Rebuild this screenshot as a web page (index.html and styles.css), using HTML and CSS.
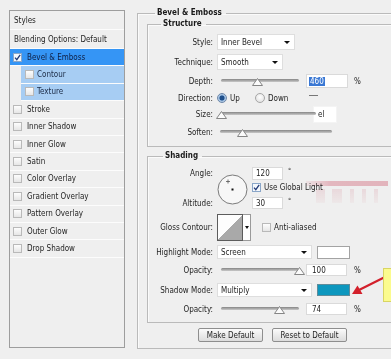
FILE: index.html
```html
<!DOCTYPE html>
<html lang="en">
<head>
    <meta charset="UTF-8">
    <title>Layer Style - Bevel &amp; Emboss</title>
    <link rel="stylesheet" href="styles.css">
</head>
<body>
    <div class="dialog">
        <div class="styles-panel">
            <div class="styles-head">Styles</div>
            <div class="styles-item blend">Blending Options: Default</div>
            <div class="styles-item active"><span class="check checked"></span>Bevel &amp; Emboss</div>
            <div class="styles-item sub"><span class="check"></span>Contour</div>
            <div class="styles-item sub"><span class="check"></span>Texture</div>
            <div class="styles-item"><span class="check"></span>Stroke</div>
            <div class="styles-item"><span class="check"></span>Inner Shadow</div>
            <div class="styles-item"><span class="check"></span>Inner Glow</div>
            <div class="styles-item"><span class="check"></span>Satin</div>
            <div class="styles-item"><span class="check"></span>Color Overlay</div>
            <div class="styles-item"><span class="check"></span>Gradient Overlay</div>
            <div class="styles-item"><span class="check"></span>Pattern Overlay</div>
            <div class="styles-item"><span class="check"></span>Outer Glow</div>
            <div class="styles-item"><span class="check"></span>Drop Shadow</div>
        </div>

        <fieldset class="group group-outer">
            <legend>Bevel &amp; Emboss</legend>

            <fieldset class="group group-structure">
                <legend>Structure</legend>
                <div class="rows structure-rows">
                    <div class="row">
                        <div class="label">Style:</div>
                        <div class="select select-style">Inner Bevel</div>
                    </div>
                    <div class="row">
                        <div class="label">Technique:</div>
                        <div class="select select-technique">Smooth</div>
                    </div>
                    <div class="row">
                        <div class="label">Depth:</div>
                        <div class="slider">
                            <div class="slider-track"></div>
                            <svg class="slider-thumb" style="left: 46%" width="11" height="8" viewBox="0 0 11 8"><polygon points="0.5,7.5 5.5,0.5 10.5,7.5" fill="#fbfbfb" stroke="#858585"/></svg>
                        </div>
                        <div class="field field-num"><span class="selected">460</span></div>
                        <span class="unit">%</span>
                    </div>
                    <div class="row">
                        <div class="label">Direction:</div>
                        <span class="radio-opt up"><span class="radio checked"></span>Up</span>
                        <span class="radio-opt"><span class="radio"></span>Down</span>
                        <span class="stray-line"></span>
                    </div>
                    <div class="row">
                        <div class="label">Size:</div>
                        <div class="slider slider-size">
                            <div class="slider-track"></div>
                            <svg class="slider-thumb" style="left: 1%" width="11" height="8" viewBox="0 0 11 8"><polygon points="0.5,7.5 5.5,0.5 10.5,7.5" fill="#fbfbfb" stroke="#858585"/></svg>
                        </div>
                        <div class="field field-size">el</div>
                    </div>
                    <div class="row">
                        <div class="label">Soften:</div>
                        <div class="slider slider-soften">
                            <div class="slider-track"></div>
                            <svg class="slider-thumb" style="left: 20%" width="11" height="8" viewBox="0 0 11 8"><polygon points="0.5,7.5 5.5,0.5 10.5,7.5" fill="#fbfbfb" stroke="#858585"/></svg>
                        </div>
                    </div>
                </div>
            </fieldset>

            <fieldset class="group group-shading">
                <legend>Shading</legend>
                <div class="angle-block">
                    <div class="label angle-label">Angle:</div>
                    <svg class="dial" width="31" height="31" viewBox="0 0 31 31">
                        <circle cx="15.5" cy="15.5" r="14.5" fill="#f7f7f7" stroke="#7b7b7b"/>
                        <rect x="14.5" y="14.5" width="2" height="2" fill="#111"/>
                        <path d="M9 7.5h4M11 5.5v4" stroke="#555" stroke-width="0.8"/>
                    </svg>
                    <div class="angle-cell angle-cell-1"><div class="field field-angle">120</div><span class="deg">°</span></div>
                    <div class="angle-cell angle-cell-2"><span class="check checked small-check"></span>Use Global Light</div>
                    <div class="label altitude-label">Altitude:</div>
                    <div class="angle-cell angle-cell-3"><div class="field field-alt">30</div><span class="deg">°</span></div>
                </div>
                <div class="rows shading-rows">
                    <div class="row">
                        <div class="label">Gloss Contour:</div>
                        <div class="contour">
                            <div class="contour-preview"></div>
                            <div class="contour-arrow"></div>
                        </div>
                        <span class="check anti-check"></span>Anti-aliased
                    </div>
                    <div class="row">
                        <div class="label">Highlight Mode:</div>
                        <div class="select select-mode">Screen</div>
                        <div class="swatch"></div>
                    </div>
                    <div class="row">
                        <div class="label">Opacity:</div>
                        <div class="slider">
                            <div class="slider-track"></div>
                            <svg class="slider-thumb" style="left: 100%" width="11" height="8" viewBox="0 0 11 8"><polygon points="0.5,7.5 5.5,0.5 10.5,7.5" fill="#fbfbfb" stroke="#858585"/></svg>
                        </div>
                        <div class="field field-op">100</div>
                        <span class="unit unit-op">%</span>
                    </div>
                    <div class="row">
                        <div class="label">Shadow Mode:</div>
                        <div class="select select-mode">Multiply</div>
                        <div class="swatch swatch-shadow"></div>
                    </div>
                    <div class="row">
                        <div class="label">Opacity:</div>
                        <div class="slider">
                            <div class="slider-track"></div>
                            <svg class="slider-thumb" style="left: 74%" width="11" height="8" viewBox="0 0 11 8"><polygon points="0.5,7.5 5.5,0.5 10.5,7.5" fill="#fbfbfb" stroke="#858585"/></svg>
                        </div>
                        <div class="field field-op">74</div>
                        <span class="unit unit-op">%</span>
                    </div>
                </div>
            </fieldset>

            <div class="buttons">
                <button class="btn btn-make">Make Default</button>
                <button class="btn btn-reset">Reset to Default</button>
            </div>
        </fieldset>

        <!-- annotations pasted over the screenshot -->
        <div class="ghost"></div>
        <svg class="red-arrow" width="40" height="26" viewBox="0 0 40 26">
            <line x1="35" y1="5" x2="11" y2="17" stroke="#d3202b" stroke-width="2.2" stroke-linecap="round"/>
            <polygon points="4,21 14.5,21 9.5,12.5" fill="#d3202b"/>
        </svg>
        <div class="note"></div>
    </div>
</body>
</html>
```

FILE: styles.css
```css
* {
    box-sizing: border-box;
}
body {
    margin: 0;
    height: 359px;
    overflow: hidden;
    background: #efefef;
    font-family: "DejaVu Sans Condensed", "Liberation Sans", sans-serif;
    font-size: 8px;
    color: #1e1e1e;
}
.dialog {
    position: relative;
    display: flex;
    align-items: flex-start;
}

/* left list of styles */
.styles-panel {
    flex: none;
    width: 116px;
    height: 338px;
    margin: 10px 0 0 9px;
    border: 1px solid #9d9d9d;
    background: #efefef;
}
.styles-head, .styles-item {
    display: flex;
    align-items: center;
    border-bottom: 1px solid #fcfcfc;
    padding-left: 3px;
    white-space: nowrap;
}
.styles-head {
    height: 19px;
    padding-left: 4px;
}
.styles-item {
    height: 17.4px;
}
.styles-item.blend {
    height: 19px;
    padding-left: 4px;
}
.styles-item.active {
    background: #3595f5;
    color: #0f1f44;
}
.styles-item.sub {
    margin-left: 11px;
    padding-left: 4px;
    background: #a7cdf3;
    color: #1b2a44;
}
.check {
    flex: none;
    display: inline-block;
    width: 9px;
    height: 9px;
    margin-right: 5px;
    border: 1px solid #b9b9b9;
    background: linear-gradient(#fdfdfd, #e6e6e6);
}
.styles-item.sub .check {
    margin-right: 3px;
}
.check.checked {
    border-color: #8aa6c8;
    background: #f4f8fc url("data:image/svg+xml,%3Csvg xmlns='http://www.w3.org/2000/svg' width='7' height='7'%3E%3Cpath d='M1 3.6l1.8 2L6.2 0.8' fill='none' stroke='%23213a78' stroke-width='1.3'/%3E%3C/svg%3E") center no-repeat;
}

/* group boxes */
.group {
    margin: 0;
    padding: 0;
    min-width: 0;
    border: 1px solid #bababa;
    box-shadow: inset 1px 1px 0 #fafafa;
}
.group > legend {
    padding: 0 4px 0 2px;
    font-weight: bold;
    line-height: 10px;
    color: #1a1a1a;
}
.group-outer {
    flex: none;
    width: 262px;
    margin: 8px 0 0 12px;
    padding: 0 0 6px 9px;
}
.group-outer > legend {
    margin-left: 8px;
}
.group-structure {
    width: 252px;
    margin-top: 1px;
    padding: 4px 0 3px 3px;
}
.group-structure > legend {
    margin-left: 10px;
}
.group-shading {
    width: 252px;
    margin-top: 4px;
    padding: 4px 0 7px 3px;
}
.group-shading > legend {
    margin-left: 12px;
}

.rows {
    display: grid;
}
.structure-rows {
    grid-template-rows: 18px 22px 16px 18px 14px 22px;
}
.shading-rows {
    grid-template-rows: 28px 22px 14px 26px 12px;
}
.row {
    display: flex;
    align-items: center;
    white-space: nowrap;
}
.label {
    flex: none;
    width: 66px;
    padding-right: 4px;
    text-align: right;
    white-space: nowrap;
}

/* controls */
.select {
    flex: none;
    display: flex;
    align-items: center;
    justify-content: space-between;
    height: 16px;
    padding: 0 4px 0 3px;
    background: #fff;
    border: 1px solid #dedede;
    overflow: hidden;
}
.select::after {
    content: "";
    flex: none;
    border-left: 3px solid transparent;
    border-right: 3px solid transparent;
    border-top: 3px solid #111;
}
.select-style { width: 78px; }
.select-technique { width: 66px; }
.select-mode {
    width: 95px;
    height: 14px;
}

.field {
    flex: none;
    display: flex;
    align-items: center;
    height: 14px;
    padding-left: 2px;
    background: #fff;
    border: 1px solid #dadada;
}
.field-num {
    width: 42px;
    margin-left: 7px;
}
.selected {
    background: #3a78d4;
    color: #fff;
    padding: 0 1px;
}
.unit {
    margin-left: 6px;
}
.field-size {
    width: 24px;
    height: 17px;
    margin-left: -3px;
    padding-left: 4px;
    border-color: #f4f4f4;
}
.field-op {
    width: 41px;
    height: 12px;
    margin-left: 7px;
    padding-left: 5px;
}
.unit-op {
    margin-left: 7px;
}

.slider {
    position: relative;
    flex: none;
    width: 78px;
    height: 8px;
    margin: 4px 0 0 4px;
}
.slider-size {
    width: 96px;
    margin-left: 3px;
}
.slider-soften {
    width: 112px;
    margin-left: 3px;
}
.slider-track {
    height: 3px;
    border-radius: 2px;
    background: linear-gradient(#858585, #c9c9c9);
}
.slider-thumb {
    position: absolute;
    top: -1px;
    margin-left: -5px;
}

.radio-opt {
    display: inline-flex;
    align-items: center;
}
.radio-opt.up {
    width: 38px;
}
.radio {
    flex: none;
    width: 10px;
    height: 10px;
    margin-right: 3px;
    border: 1px solid #a6a6a6;
    border-radius: 50%;
    background: radial-gradient(circle at 50% 40%, #fefefe, #dcdcdc);
}
.radio.checked {
    border-color: #6c86a8;
    background: radial-gradient(circle, #1f4f8a 0 2.2px, #8fb3da 2.8px, #dbe7f3 5px);
}
.stray-line {
    width: 9px;
    height: 1px;
    margin: -5px 0 0 21px;
    background: #777;
}

/* angle / altitude */
.angle-block {
    display: grid;
    grid-template-columns: 66px 35px 1fr;
    grid-template-rows: 16px 12px 20px;
    align-items: center;
}
.angle-label { grid-column: 1; grid-row: 1; }
.altitude-label { grid-column: 1; grid-row: 3; }
.dial {
    grid-column: 2;
    grid-row: 1 / 4;
}
.angle-cell {
    grid-column: 3;
    display: flex;
    align-items: center;
    white-space: nowrap;
}
.angle-cell-1 { grid-row: 1; }
.angle-cell-2 { grid-row: 2; }
.angle-cell-3 { grid-row: 3; }
.field-angle {
    width: 31px;
    height: 13px;
    padding-left: 3px;
}
.field-alt {
    width: 31px;
    height: 12px;
    padding-left: 3px;
}
.deg {
    margin: 0 0 4px 5px;
    font-size: 7px;
}
.small-check {
    margin-right: 3px;
    background-color: #d3e2f2;
}

.contour {
    flex: none;
    display: flex;
    height: 27px;
}
.contour-preview {
    width: 26px;
    border: 1px solid #5c5c5c;
    background: linear-gradient(to bottom right, #fdfdfd 50%, #a9a9a9 50%);
}
.contour-arrow {
    display: flex;
    align-items: center;
    justify-content: center;
    width: 8px;
    background: #fff;
    border: 1px solid #9a9a9a;
    border-left: none;
}
.contour-arrow::after {
    content: "";
    border-left: 2px solid transparent;
    border-right: 2px solid transparent;
    border-top: 3px solid #111;
}
.anti-check {
    margin: 0 3px 0 11px;
}

.swatch {
    flex: none;
    width: 33px;
    height: 13px;
    margin-left: 5px;
    background: #fff;
    border: 1px solid #a3a3a3;
}
.swatch-shadow {
    height: 12px;
    background: #0d97be;
    border-color: #5f8c9a;
}

/* bottom buttons */
.buttons {
    display: flex;
    gap: 9px;
    margin-top: 5px;
    padding-left: 51px;
}
.btn {
    height: 14px;
    padding: 0;
    border: 1px solid #8e8e8e;
    border-radius: 2px;
    background: linear-gradient(#fbfbfb, #dcdcdc);
    font: inherit;
    color: #1e1e1e;
}
.btn-make { width: 65px; }
.btn-reset { width: 75px; }

/* annotations on top of the dialog */
.ghost {
    position: absolute;
    left: 306px;
    top: 181px;
    width: 82px;
    height: 26px;
    mix-blend-mode: multiply;
    background:
        linear-gradient(to right, rgba(244, 190, 200, 0.2), #f3c3cb 30%, #f2c0c9) top / 100% 5px no-repeat,
        linear-gradient(rgba(238, 186, 194, 0.35), rgba(238, 186, 194, 0.1)) 10px 8px / 9px 14px no-repeat,
        linear-gradient(rgba(238, 186, 194, 0.35), rgba(238, 186, 194, 0.1)) 26px 8px / 10px 14px no-repeat,
        linear-gradient(rgba(238, 186, 194, 0.35), rgba(238, 186, 194, 0.1)) 44px 8px / 4px 14px no-repeat,
        linear-gradient(rgba(238, 186, 194, 0.35), rgba(238, 186, 194, 0.1)) 56px 8px / 4px 14px no-repeat,
        linear-gradient(rgba(238, 186, 194, 0.35), rgba(238, 186, 194, 0.1)) 68px 8px / 4px 14px no-repeat;
}
.red-arrow {
    position: absolute;
    left: 348px;
    top: 273px;
}
.note {
    position: absolute;
    left: 383px;
    top: 268px;
    width: 14px;
    height: 34px;
    background: #fbfb8e;
    border: 1px solid #d9d563;
}
```
